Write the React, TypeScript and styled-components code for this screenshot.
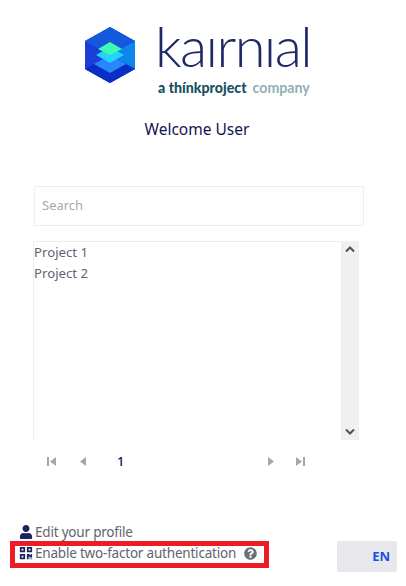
import { createGlobalStyle, styled } from 'styled-components'
import { FaUser, FaQrcode, FaQuestionCircle } from 'react-icons/fa'

const projects = ['Project 1', 'Project 2']

const GlobalStyle = createGlobalStyle`
  html, body {
    margin: 0;
    padding: 0;
    background: #fff;
    font-family: 'Noto Sans', 'Open Sans', sans-serif;
  }
  * {
    box-sizing: border-box;
  }
`

const Page = styled.div`
  width: 406px;
  height: 586px;
  overflow: hidden;
  display: flex;
  flex-direction: column;
`

const Brand = styled.header`
  display: flex;
  gap: 20px;
  margin: 27px 0 0 85px;
  height: 70px;
`

const BrandText = styled.div`
  display: flex;
  flex-direction: column;
  color: #1e2a68;
`

const Wordmark = styled.div`
  font-family: Lato, sans-serif;
  font-weight: 300;
  font-size: 56px;
  line-height: 50px;
  height: 50px;
  letter-spacing: -1.6px;
  margin-top: -6px;
`

const Tagline = styled.div`
  font-family: Lato, sans-serif;
  font-weight: 900;
  font-size: 14.2px;
  line-height: 16px;
  margin: 9px 0 0 3px;
  color: #17505f;
  white-space: nowrap;
`

const Company = styled.span`
  font-weight: 700;
  color: #8fb0b8;
  margin-left: 6px;
`

const Welcome = styled.h1`
  margin: 22px 0 0;
  width: 394px;
  text-align: center;
  font-size: 15.5px;
  line-height: 20px;
  font-weight: 400;
  color: #14144e;
`

const SearchInput = styled.input`
  display: block;
  width: 330px;
  height: 40px;
  margin: 47px 0 0 34px;
  padding: 0 7px 2px;
  border: 1px solid #eeeeee;
  outline: none;
  font: inherit;
  font-size: 13px;
  color: #555;
  &::placeholder {
    color: #a9a9a9;
  }
`

const ListBox = styled.div`
  display: flex;
  width: 326px;
  height: 199px;
  margin: 15px 0 0 33px;
  border-left: 1px solid #eeeeee;
  border-top: 1px solid #eeeeee;
`

const Items = styled.ul`
  flex: 1;
  list-style: none;
  margin: 0;
  padding: 0;
`

const Item = styled.li`
  font-size: 13.2px;
  line-height: 21px;
  color: #5f6470;
`

const Scrollbar = styled.div`
  width: 18px;
  margin-top: -1px;
  background: #f0f0f0;
  display: flex;
  flex-direction: column;
  justify-content: space-between;
  align-items: center;
  padding: 5px 0;
  color: #505050;
`

const Pager = styled.nav`
  display: flex;
  align-items: center;
  height: 20px;
  margin-top: 11px;
  padding-left: 47px;
  color: #a3a6ab;
`

const PagerIcon = styled.svg<{ $gap: number }>`
  width: 9px;
  height: 9px;
  fill: currentColor;
  margin-right: ${(p) => p.$gap}px;
`

const PageNumber = styled.span`
  width: 149px;
  font-size: 13px;
  font-weight: 500;
  color: #14144e;
`

const Footer = styled.footer`
  margin-top: auto;
  display: flex;
  justify-content: space-between;
  align-items: flex-end;
  padding: 0 9px 14px 10px;
`

const Links = styled.div`
  display: flex;
  flex-direction: column;
  margin-bottom: 4px;
`

const LinkRow = styled.a<{ $flagged?: boolean }>`
  display: flex;
  align-items: center;
  gap: 2px;
  height: ${(p) => (p.$flagged ? '27px' : '19px')};
  padding-left: ${(p) => (p.$flagged ? '4px' : '9px')};
  padding-bottom: ${(p) => (p.$flagged ? '3px' : '0')};
  width: ${(p) => (p.$flagged ? '259px' : 'auto')};
  border: ${(p) => (p.$flagged ? '5px solid #ed1c24' : 'none')};
  font-size: 13.5px;
  letter-spacing: -0.2px;
  color: #5f6470;
  white-space: nowrap;
  svg {
    color: #1a2360;
    width: 14px;
    height: 14px;
    flex: none;
  }
`

const Help = styled(FaQuestionCircle)`
  && {
    color: #6c717a;
    width: 13px;
    height: 13px;
    margin-left: 6px;
  }
`

const LangButton = styled.button`
  width: 60px;
  height: 31px;
  border: none;
  border-radius: 2px;
  background: #e8e8ec;
  color: #1a50e0;
  font: inherit;
  font-size: 13px;
  font-weight: 700;
  text-align: right;
  padding: 0 7px 2px 0;
`

function Logo() {
  return (
    <svg width="50" height="56" viewBox="0 0 50 56" aria-label="logo">
      <polygon points="25,0 50,14 50,42 25,56 0,42 0,14" fill="#1550dc" />
      <polygon points="25,28 50,14 50,42 25,56" fill="#0c86ea" />
      <polygon points="0,14 25,28 25,56 0,42" fill="#1a3fd6" />
      <polygon points="0,42 25,28 50,42 25,56" fill="#0a2ec4" />
      <polygon points="25,0 50,14 25,28 0,14" fill="#1558dc" />
      <polygon points="25,28 41,37 25,46 9,37" fill="#2a86fb" />
      <polygon points="25,20 39,28 25,36 11,28" fill="#25d2fb" />
      <polygon points="25,15 37,22 25,28 13,22" fill="#3bfbb5" />
    </svg>
  )
}

export default function App() {
  return (
    <Page>
      <GlobalStyle />
      <Brand>
        <Logo />
        <BrandText>
          <Wordmark>kaırnıal</Wordmark>
          <Tagline>
            a thínkproject<Company>company</Company>
          </Tagline>
        </BrandText>
      </Brand>

      <Welcome>Welcome User</Welcome>

      <SearchInput placeholder="Search" />

      <ListBox>
        <Items>
          {projects.map((name) => (
            <Item key={name}>{name}</Item>
          ))}
        </Items>
        <Scrollbar>
          <svg width="10" height="7" viewBox="0 0 10 7">
            <path d="M1 5.5 5 1.5 9 5.5" fill="none" stroke="currentColor" strokeWidth="2" />
          </svg>
          <svg width="10" height="7" viewBox="0 0 10 7">
            <path d="M1 1.5 5 5.5 9 1.5" fill="none" stroke="currentColor" strokeWidth="2" />
          </svg>
        </Scrollbar>
      </ListBox>

      <Pager>
        <PagerIcon $gap={23} viewBox="0 0 9 9">
          <path d="M0 0h2v9H0zM9 0v9L3 4.500z" />
        </PagerIcon>
        <PagerIcon $gap={29} viewBox="0 0 9 9">
          <path d="M7 0v9L1 4.500z" />
        </PagerIcon>
        <PageNumber>1</PageNumber>
        <PagerIcon $gap={21} viewBox="0 0 9 9">
          <path d="M2 0v9l6-4.500z" />
        </PagerIcon>
        <PagerIcon $gap={0} viewBox="0 0 9 9">
          <path d="M0 0v9l6-4.500zM7 0h2v9H7z" />
        </PagerIcon>
      </Pager>

      <Footer>
        <Links>
          <LinkRow>
            <FaUser />
            Edit your profile
          </LinkRow>
          <LinkRow $flagged>
            <FaQrcode />
            Enable two-factor authentication
            <Help />
          </LinkRow>
        </Links>
        <LangButton>EN</LangButton>
      </Footer>
    </Page>
  )
}
